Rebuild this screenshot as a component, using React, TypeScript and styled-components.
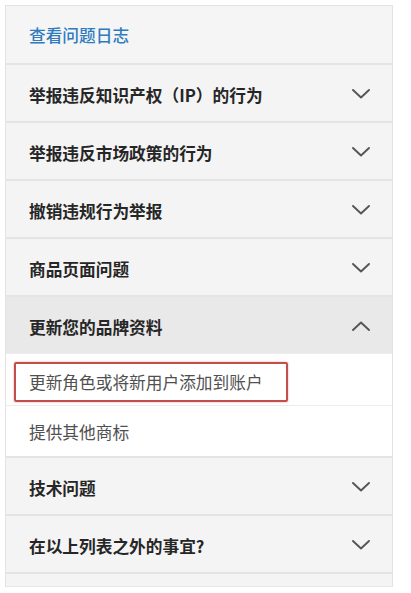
import styled, { createGlobalStyle } from "styled-components";
import React, { useState } from "react";

const GlobalStyle = createGlobalStyle`
  html, body {
    margin: 0;
    padding: 0;
    background: #fff;
  }
  body {
    font-family: "Noto Sans CJK SC", "Liberation Sans", sans-serif;
  }
`;

const Page = styled.div`
  padding: 5px 0 0 5px;
  width: 388px;
`;

const Panel = styled.div`
  border: 1px solid #e2e2e2;
  border-bottom: none;
  background: #f4f4f4;
`;

const LogRow = styled.div`
  height: 57px;
  display: flex;
  align-items: center;
  padding-left: 23px;
  background: #f5f5f5;
  font-size: 16.7px;
  font-weight: 500;
  color: #2f7bbd;
  cursor: pointer;
`;

const Row = styled.div<{ $open?: boolean }>`
  height: 56px;
  box-sizing: content-box;
  display: flex;
  align-items: center;
  justify-content: space-between;
  padding: 0 22px 0 23px;
  border-top: 2px solid #e4e4e4;
  background: ${(p) => (p.$open ? "#e9e9e9" : "#f4f4f4")};
  font-size: 16.7px;
  font-weight: 700;
  color: #262626;
  cursor: pointer;
`;

const Title = styled.span`
  padding-top: 4px;
`;

const ChevronBox = styled.span`
  display: flex;
  margin-top: 1px;
`;

const SubItem = styled.div<{ $highlight?: boolean }>`
  height: ${(p) => (p.$highlight ? "52px" : "51px")};
  display: flex;
  align-items: ${(p) => (p.$highlight ? "flex-end" : "center")};
  box-sizing: border-box;
  padding: ${(p) => (p.$highlight ? "0 0 3px 23px" : "2px 0 0 23px")};
  border-top: 1px solid #ececec;
  background: #fff;
  font-size: 16.7px;
  color: #505050;
`;

const Highlight = styled.span`
  margin-left: -15px;
  padding: 8px 23px 8px 13px;
  border: 2px solid #c24f4c;
  border-radius: 2px;
  box-shadow: 0 0 2px rgba(194, 79, 76, 0.6);
  line-height: 20px;
`;

const Tail = styled.div`
  height: 12px;
  border-top: 2px solid #e4e4e4;
  border-bottom: 1px solid #e6e6e6;
  background: #f4f4f4;
`;

const Chevron = ({ up }: { up?: boolean }) => (
  <svg width="18" height="10" viewBox="0 0 18 10" fill="none">
    <polyline
      points={up ? "1,9 9,1.5 17,9" : "1,1 9,8.5 17,1"}
      stroke="#555"
      strokeWidth={1.9}
      strokeLinecap="round"
      strokeLinejoin="round"
    />
  </svg>
);

const sections = [
  "举报违反知识产权（IP）的行为",
  "举报违反市场政策的行为",
  "撤销违规行为举报",
  "商品页面问题",
  "更新您的品牌资料",
  "技术问题",
  "在以上列表之外的事宜?",
];

const App = () => {
  const [open, setOpen] = useState(4);

  return (
    <Page>
      <GlobalStyle />
      <Panel>
        <LogRow>查看问题日志</LogRow>
        {sections.map((title, i) => (
          <React.Fragment key={title}>
            <Row $open={open === i} onClick={() => setOpen(open === i ? -1 : i)}>
              <Title>{title}</Title>
              <ChevronBox>
                <Chevron up={open === i} />
              </ChevronBox>
            </Row>
            {open === i && i === 4 && (
              <>
                <SubItem $highlight>
                  <Highlight>更新角色或将新用户添加到账户</Highlight>
                </SubItem>
                <SubItem>提供其他商标</SubItem>
              </>
            )}
          </React.Fragment>
        ))}
        <Tail />
      </Panel>
    </Page>
  );
};

export default App;
